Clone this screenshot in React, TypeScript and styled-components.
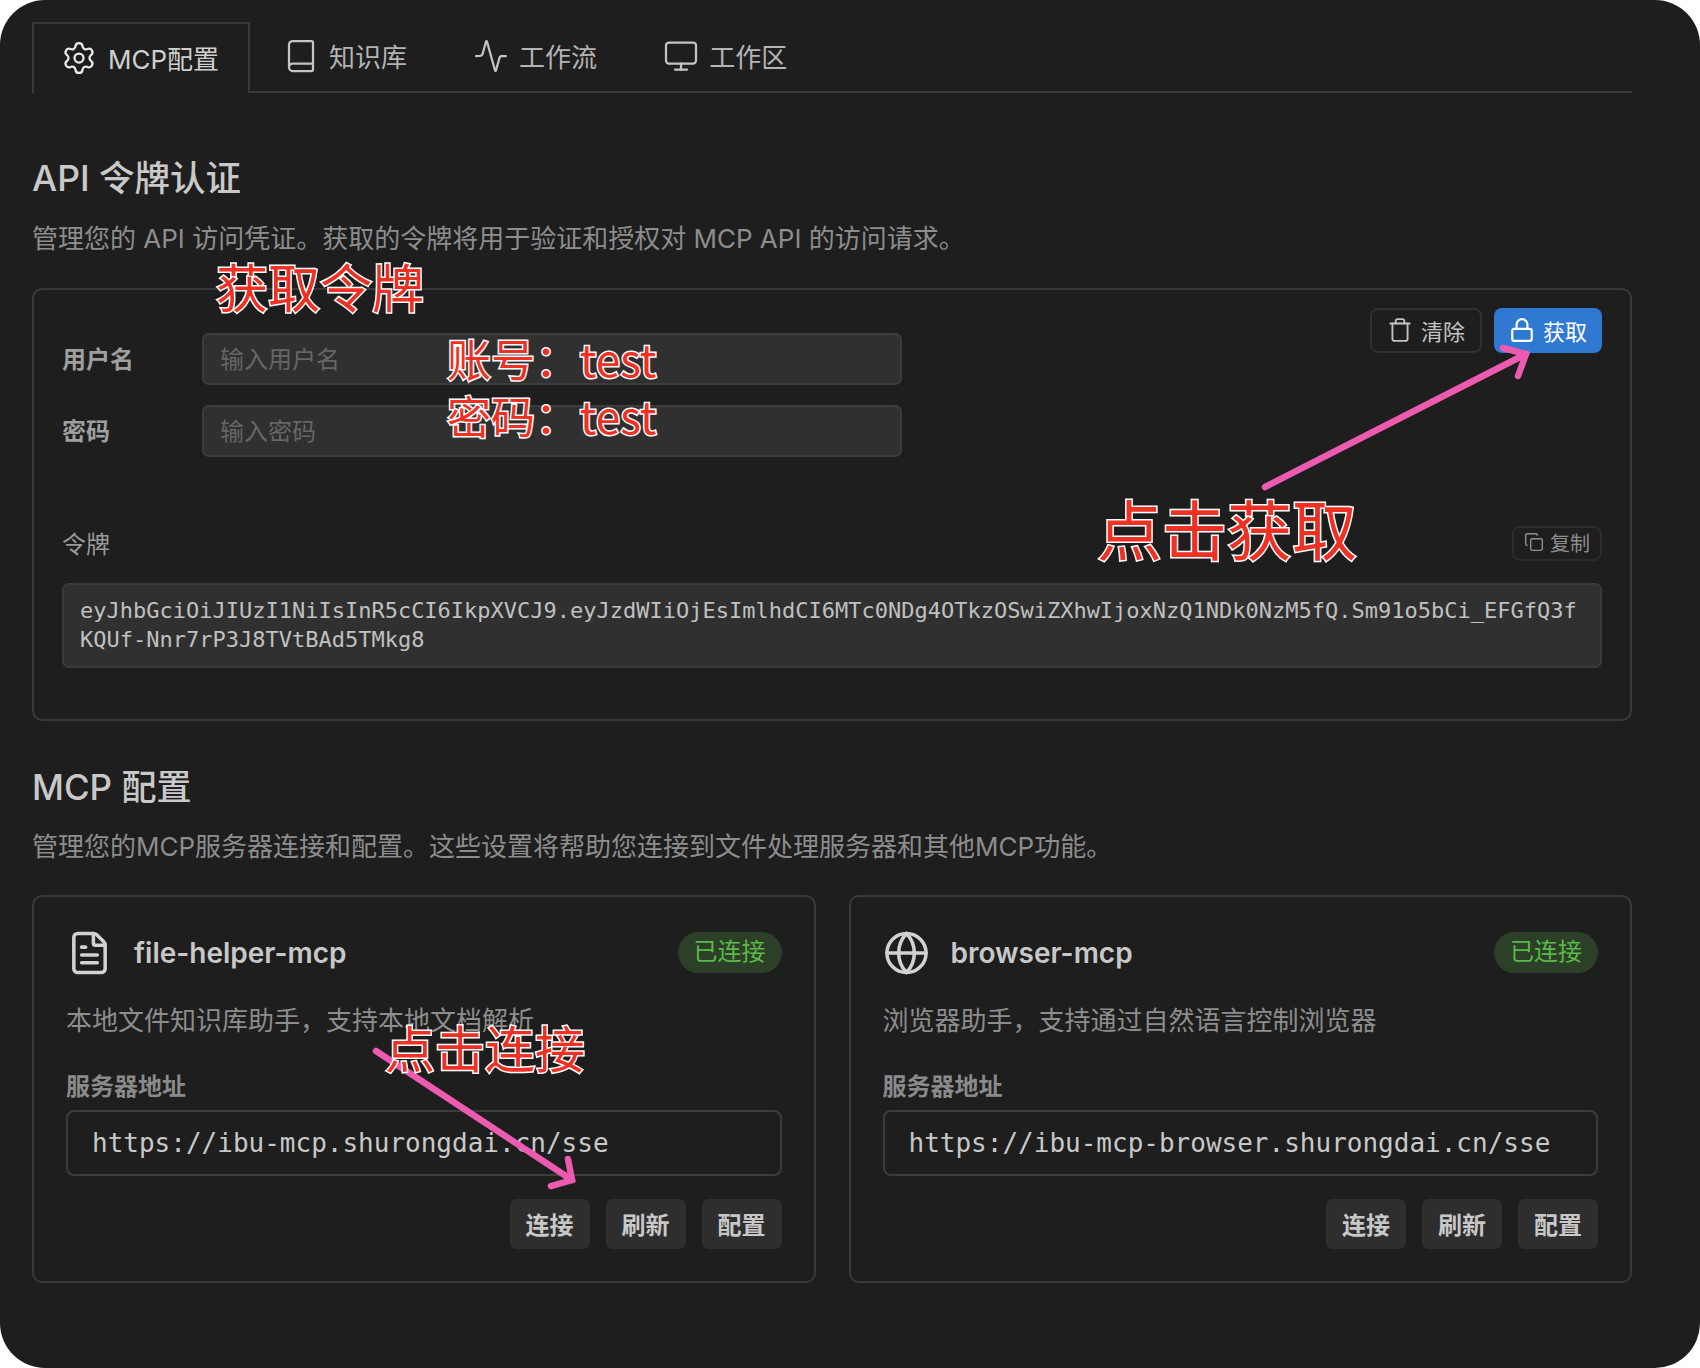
import React from "react";
import styled, { createGlobalStyle } from "styled-components";
import { Activity, Book, Copy, FileText, Globe, Lock, Monitor, Settings, Trash } from "lucide-react";

const sans = `Inter, "Noto Sans CJK SC", sans-serif`;
const mono = `"DejaVu Sans Mono", "Noto Sans CJK SC", monospace`;

const GlobalStyle = createGlobalStyle`
    html, body {
        margin: 0;
        padding: 0;
        background: #ffffff;
    }
    * {
        box-sizing: border-box;
    }
`;

const tabs = [
    { label: "MCP配置", icon: Settings, active: true },
    { label: "知识库", icon: Book, active: false },
    { label: "工作流", icon: Activity, active: false },
    { label: "工作区", icon: Monitor, active: false },
];

const servers = [
    {
        name: "file-helper-mcp",
        icon: FileText,
        desc: "本地文件知识库助手，支持本地文档解析",
        url: "https://ibu-mcp.shurongdai.cn/sse",
    },
    {
        name: "browser-mcp",
        icon: Globe,
        desc: "浏览器助手，支持通过自然语言控制浏览器",
        url: "https://ibu-mcp-browser.shurongdai.cn/sse",
    },
];

const token =
    "eyJhbGciOiJIUzI1NiIsInR5cCI6IkpXVCJ9.eyJzdWIiOjEsImlhdCI6MTc0NDg4OTkzOSwiZXhwIjoxNzQ1NDk0NzM5fQ.Sm91o5bCi_EFGfQ3fKQUf-Nnr7rP3J8TVtBAd5TMkg8";

export default function App() {
    return (
        <Page>
            <GlobalStyle />
            <Window>
                <TabBar>
                    {tabs.map((tab) => (
                        <Tab key={tab.label} $active={tab.active}>
                            <tab.icon size={36} strokeWidth={1.5} />
                            {tab.label}
                        </Tab>
                    ))}
                </TabBar>

                <SectionTitle>API 令牌认证</SectionTitle>
                <SectionDesc>管理您的 API 访问凭证。获取的令牌将用于验证和授权对 MCP API 的访问请求。</SectionDesc>

                <TokenCard>
                    <TopRow>
                        <Form>
                            <FormRow>
                                <FormLabel>用户名</FormLabel>
                                <TextInput placeholder="输入用户名" readOnly />
                            </FormRow>
                            <FormRow>
                                <FormLabel>密码</FormLabel>
                                <TextInput placeholder="输入密码" readOnly />
                            </FormRow>
                        </Form>
                        <Actions>
                            <GhostButton>
                                <Trash size={26} strokeWidth={1.7} />
                                清除
                            </GhostButton>
                            <PrimaryButton>
                                <Lock size={26} strokeWidth={2} />
                                获取
                            </PrimaryButton>
                        </Actions>
                    </TopRow>
                    <TokenHeader>
                        <TokenLabel>令牌</TokenLabel>
                        <CopyButton>
                            <Copy size={20} strokeWidth={1.7} />
                            复制
                        </CopyButton>
                    </TokenHeader>
                    <TokenBox>{token}</TokenBox>
                </TokenCard>

                <McpTitle>MCP 配置</McpTitle>
                <SectionDesc>管理您的MCP服务器连接和配置。这些设置将帮助您连接到文件处理服务器和其他MCP功能。</SectionDesc>

                <ServerGrid>
                    {servers.map((server) => (
                        <ServerCard key={server.name}>
                            <ServerHead>
                                <ServerIcon>
                                    <server.icon size={54} strokeWidth={1.8} />
                                </ServerIcon>
                                <ServerName>{server.name}</ServerName>
                                <Badge>已连接</Badge>
                            </ServerHead>
                            <ServerDesc>{server.desc}</ServerDesc>
                            <FieldLabel>服务器地址</FieldLabel>
                            <UrlBox>{server.url}</UrlBox>
                            <ButtonRow>
                                <SmallButton>连接</SmallButton>
                                <SmallButton>刷新</SmallButton>
                                <SmallButton>配置</SmallButton>
                            </ButtonRow>
                        </ServerCard>
                    ))}
                </ServerGrid>
            </Window>

            <ArrowLayer viewBox="0 0 1700 1368">
                <polyline points="1265,487 1526,354" />
                <polyline points="1503,348 1526,354 1518,376" />
                <polyline points="376,1051 572,1180" />
                <polyline points="568,1159 572,1180 551,1186" />
            </ArrowLayer>

            <Note $left={216} $top={286} $size={52}>获取令牌</Note>
            <Note $left={447} $top={358} $size={44}>账号： test</Note>
            <Note $left={447} $top={415} $size={44}>密码： test</Note>
            <Note $left={1097} $top={527} $size={65}>点击获取</Note>
            <Note $left={385} $top={1046} $size={50}>点击连接</Note>
        </Page>
    );
}

const Page = styled.div`
    position: relative;
    width: 1700px;
    height: 1368px;
    background: #ffffff;
    overflow: hidden;
    font-family: ${sans};
`;

const Window = styled.div`
    width: 100%;
    height: 100%;
    padding: 22px 68px 0 32px;
    border-radius: 45px;
    background: #1e1e1e;
`;

const TabBar = styled.div`
    display: flex;
    height: 71px;
    border-bottom: 2px solid #3a3a3a;
`;

const Tab = styled.div<{ $active: boolean }>`
    display: flex;
    align-items: center;
    gap: ${(props) => (props.$active ? "11px" : "10px")};
    height: ${(props) => (props.$active ? "71px" : "69px")};
    padding: ${(props) => (props.$active ? "0 29px 2px 27px" : "0 31px 4px")};
    border: 2px solid ${(props) => (props.$active ? "#3a3a3a" : "transparent")};
    border-bottom: 0;
    background: #1e1e1e;
    font-size: 26px;
    color: ${(props) => (props.$active ? "#cfcfcf" : "#b4b4b4")};
    svg {
        color: ${(props) => (props.$active ? "#ececec" : "#c4c4c4")};
    }
`;

const SectionTitle = styled.h2`
    margin: 62px 0 0;
    font-size: 35.5px;
    line-height: 48px;
    font-weight: 500;
    color: #c9c9c9;
`;

const McpTitle = styled(SectionTitle)`
    margin-top: 42px;
    font-size: 35px;
`;

const SectionDesc = styled.p`
    margin: 18px 0 0;
    font-size: 26px;
    line-height: 36px;
    color: #8d8d8d;
`;

const TokenCard = styled.div`
    margin-top: 31px;
    height: 433px;
    padding: 18px 28px 0;
    border: 2px solid #3a3a3a;
    border-radius: 10px;
`;

const TopRow = styled.div`
    display: flex;
    justify-content: space-between;
    align-items: flex-start;
`;

const Form = styled.div`
    display: flex;
    flex-direction: column;
    gap: 20px;
    margin-top: 25px;
`;

const FormRow = styled.div`
    display: flex;
    align-items: center;
`;

const FormLabel = styled.div`
    width: 140px;
    padding-bottom: 4px;
    font-size: 24px;
    font-weight: 700;
    color: #9f9f9f;
`;

const TextInput = styled.input`
    width: 700px;
    height: 52px;
    padding: 0 16px;
    border: 2px solid #3c3c3c;
    border-radius: 7px;
    background: #303030;
    font-family: ${sans};
    font-size: 24px;
    outline: none;
    &::placeholder {
        color: #666666;
    }
`;

const Actions = styled.div`
    display: flex;
    gap: 12px;
`;

const GhostButton = styled.button`
    display: flex;
    align-items: center;
    justify-content: center;
    gap: 8px;
    width: 112px;
    height: 45px;
    padding: 0 0 2px;
    border: 2px solid #303030;
    border-radius: 8px;
    background: transparent;
    font-family: ${sans};
    font-size: 22px;
    color: #c4c4c4;
`;

const PrimaryButton = styled(GhostButton)`
    width: 108px;
    border: 0;
    background: #3079d2;
    color: #ffffff;
`;

const TokenHeader = styled.div`
    display: flex;
    justify-content: space-between;
    align-items: center;
    margin-top: 68px;
`;

const TokenLabel = styled.div`
    padding-bottom: 1px;
    font-size: 24px;
    color: #9a9a9a;
`;

const CopyButton = styled(GhostButton)`
    gap: 6px;
    width: 90px;
    height: 35px;
    border-color: #2c2c2c;
    font-size: 20px;
    color: #8e8e8e;
`;

const TokenBox = styled.div`
    margin-top: 22px;
    height: 85px;
    padding: 11px 16px;
    border: 2px solid #3a3a3a;
    border-radius: 7px;
    background: #303030;
    font-family: ${mono};
    font-size: 22px;
    line-height: 29px;
    color: #c0c0c0;
    word-break: break-all;
`;

const ServerGrid = styled.div`
    display: grid;
    grid-template-columns: 1fr 1fr;
    gap: 33px;
    margin-top: 30px;
`;

const ServerCard = styled.div`
    height: 388px;
    padding: 35px 32px 0;
    border: 2px solid #3a3a3a;
    border-radius: 10px;
`;

const ServerHead = styled.div`
    display: flex;
    align-items: center;
    height: 41px;
`;

const ServerIcon = styled.div`
    display: flex;
    justify-content: center;
    width: 47px;
    margin-right: 21px;
    color: #d2d2d2;
`;

const ServerName = styled.div`
    flex: 1;
    font-size: 28px;
    font-weight: 600;
    color: #c8c8c8;
`;

const Badge = styled.div`
    width: 104px;
    height: 41px;
    border-radius: 21px;
    background: #2c4027;
    font-size: 24px;
    line-height: 40px;
    text-align: center;
    color: #5cb84a;
`;

const ServerDesc = styled.div`
    margin-top: 30px;
    font-size: 26px;
    line-height: 36px;
    color: #8d8d8d;
`;

const FieldLabel = styled.div`
    margin-top: 31px;
    font-size: 24px;
    line-height: 34px;
    font-weight: 700;
    color: #8a8a8a;
`;

const UrlBox = styled.div`
    margin-top: 6px;
    height: 66px;
    padding: 0 24px;
    border: 2px solid #3c3c3c;
    border-radius: 8px;
    font-family: ${mono};
    font-size: 26px;
    line-height: 62px;
    color: #c8c8c8;
`;

const ButtonRow = styled.div`
    display: flex;
    justify-content: flex-end;
    gap: 16px;
    margin-top: 23px;
`;

const SmallButton = styled.button`
    width: 80px;
    height: 50px;
    padding: 0 0 2px;
    border: 0;
    border-radius: 6px;
    background: #2e2e2e;
    font-family: ${sans};
    font-size: 24px;
    font-weight: 600;
    color: #c8c8c8;
`;

const ArrowLayer = styled.svg`
    position: absolute;
    inset: 0;
    width: 1700px;
    height: 1368px;
    pointer-events: none;
    polyline {
        fill: none;
        stroke: #ec5bb0;
        stroke-width: 6.5;
        stroke-linecap: round;
        stroke-linejoin: miter;
    }
`;

const Note = styled.div<{ $left: number; $top: number; $size: number }>`
    position: absolute;
    left: ${(props) => props.$left}px;
    top: ${(props) => props.$top}px;
    transform: translateY(-50%);
    font-family: "Noto Sans CJK SC", "Liberation Sans", sans-serif;
    font-size: ${(props) => props.$size}px;
    line-height: 1;
    font-weight: 400;
    white-space: nowrap;
    word-spacing: -9px;
    color: #ee3124;
    -webkit-text-stroke: 3px #ffffff;
    paint-order: stroke fill;
`;
